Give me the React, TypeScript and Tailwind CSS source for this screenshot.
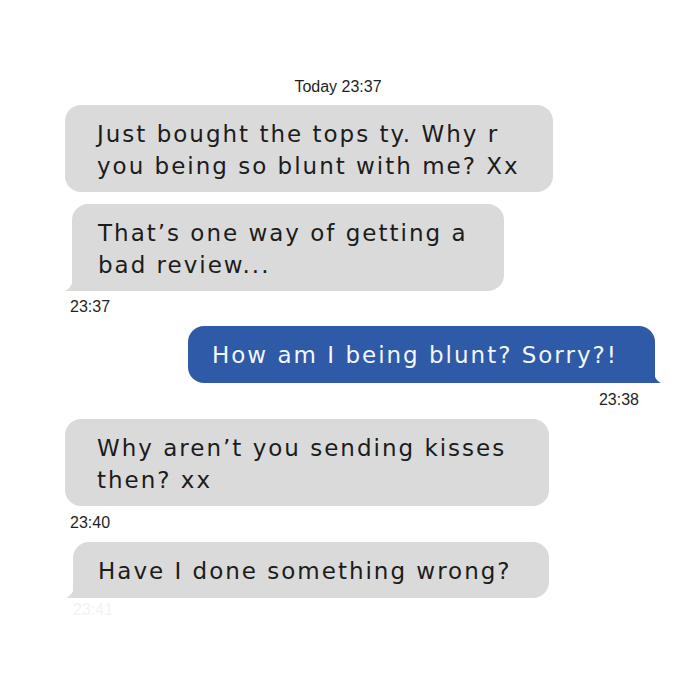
import type { ReactNode } from 'react';

const font = { fontFamily: '"Liberation Sans", Arial, sans-serif' };
const bubbleFont = { fontFamily: '"DejaVu Sans", "Liberation Sans", sans-serif' };

interface BubbleProps {
    children: ReactNode;
    width: string;
    tail?: boolean;
}

function GrayBubble({ children, width, tail }: BubbleProps) {
    return (
        <div
            style={bubbleFont}
            className={`relative bg-[#dadada] text-[#1c1c1c] text-[23px] leading-[32px] tracking-[2px] pt-[13px] pb-[10px] ${
                tail ? 'ml-[7px] rounded-[16px] rounded-bl-none pl-[26px]' : 'rounded-[16px] pl-[32px]'
            } ${width}`}
        >
            {children}
            {tail && (
                <svg className="absolute left-[-7px] bottom-0" width="8" height="13" viewBox="0 0 8 13">
                    <path d="M8 0 C8 6 5 10.5 0 13 L8 13 Z" fill="#dadada" />
                </svg>
            )}
        </div>
    );
}

function Stamp({ children, className = '' }: { children: ReactNode; className?: string }) {
    return <div className={`text-[16px] leading-[20px] text-[#1f1f1f] ${className}`}>{children}</div>;
}

export default function App() {
    return (
        <div style={font} className="w-[700px] h-[700px] bg-white flex flex-col pt-[77px] pl-[65px] pr-[45px]">
            {/* Day header */}
            <Stamp className="text-center ml-[-65px] mr-[-21px]">Today 23:37</Stamp>

            <div className="mt-[8px]">
                <GrayBubble width="w-[488px]">
                    Just bought the tops ty. Why r
                    <br />
                    you being so blunt with me? Xx
                </GrayBubble>
            </div>

            <div className="mt-[12px]">
                <GrayBubble width="w-[432px]" tail>
                    That’s one way of getting a
                    <br />
                    bad review...
                </GrayBubble>
            </div>
            <Stamp className="mt-[6px] pl-[5px]">23:37</Stamp>

            {/* Outgoing */}
            <div className="mt-[9px] flex justify-end">
                <div
                    style={bubbleFont}
                    className="relative bg-[#2e5aa8] text-[#f4f6fb] text-[23px] leading-[32px] tracking-[2px] pt-[13px] pb-[12px] pl-[24px] w-[467px] rounded-[16px] rounded-br-none"
                >
                    How am I being blunt? Sorry?!
                    <svg className="absolute right-[-6px] bottom-0" width="7" height="11" viewBox="0 0 7 11">
                        <path d="M0 0 C0 5 3 9 7 11 L0 11 Z" fill="#2e5aa8" />
                    </svg>
                </div>
            </div>
            <Stamp className="mt-[7px] text-right pr-[16px]">23:38</Stamp>

            <div className="mt-[9px]">
                <GrayBubble width="w-[484px]">
                    Why aren’t you sending kisses
                    <br />
                    then? xx
                </GrayBubble>
            </div>
            <Stamp className="mt-[7px] pl-[5px]">23:40</Stamp>

            <div className="mt-[9px]">
                <div
                    style={bubbleFont}
                    className="relative ml-[8px] w-[476px] bg-[#dadada] text-[#1c1c1c] text-[23px] leading-[32px] tracking-[2px] pt-[13px] pb-[11px] pl-[25px] rounded-[16px] rounded-bl-none"
                >
                    Have I done something wrong?
                    <svg className="absolute left-[-7px] bottom-0" width="8" height="12" viewBox="0 0 8 12">
                        <path d="M8 0 C8 5.5 5 9.5 0 12 L8 12 Z" fill="#dadada" />
                    </svg>
                </div>
            </div>
            <Stamp className="mt-[2px] pl-[8px] text-[#f2f2f2]">23:41</Stamp>
        </div>
    );
}
